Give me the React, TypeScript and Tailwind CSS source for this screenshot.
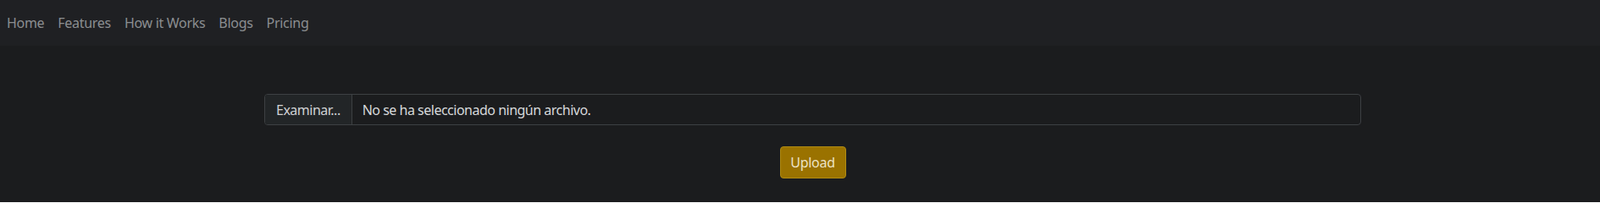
import React from 'react';

const navLinks = ['Home', 'Features', 'How it Works', 'Blogs', 'Pricing'];

export default function App() {
	return (
		<div
			className="min-h-[239px] bg-[#1b1c1e] text-[#d6d8da]"
			style={{ fontFamily: '"Noto Sans", "Open Sans", sans-serif' }}>
			<nav className="flex h-[54px] items-center bg-[#1f2023]">
				<ul className="flex items-center">
					{navLinks.map((link) => (
						<li key={link}>
							<a href="#" className="block px-2 text-[16px] tracking-[-0.3px] text-[#8b8e91]">
								{link}
							</a>
						</li>
					))}
				</ul>
			</nav>

			<main className="pt-[57px]">
				<form className="ml-[312px] flex w-[1295px] flex-col items-center">
					<label className="flex h-[37px] w-full overflow-hidden rounded-[4px] border border-[#3d4043] bg-[#1b1c1e] text-[16px] tracking-[-0.5px]">
						<span className="flex items-center border-r border-[#3d4043] bg-[#222527] px-[13px] text-[#cfd1d3]">
							Examinar...
						</span>
						<span className="flex items-center px-[12px] text-[#d6d8da]">
							No se ha seleccionado ningún archivo.
						</span>
					</label>

					<button
						type="button"
						className="mt-[25px] h-[38px] w-[78px] rounded-[4px] border border-[#b08a12] bg-[#9a7200] text-[16px] tracking-[-0.3px] text-[#ece2c8]">
						Upload
					</button>
				</form>
			</main>
		</div>
	);
}
